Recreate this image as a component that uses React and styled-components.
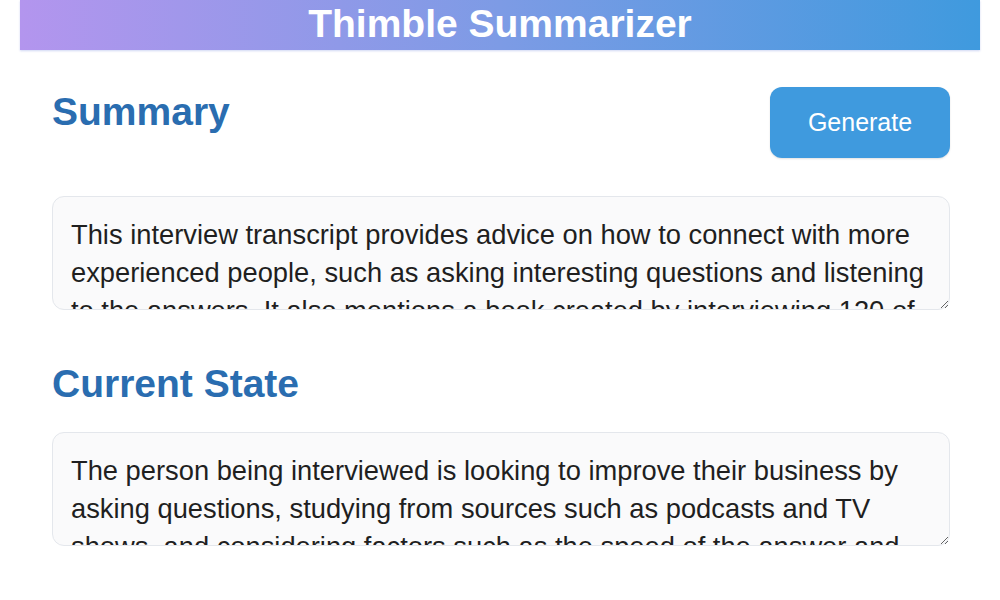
import React from "react";
import styled, { createGlobalStyle } from "styled-components";

const GlobalStyle = createGlobalStyle`
  body {
    margin: 0;
    background: #ffffff;
    font-family: "Liberation Sans", Arial, sans-serif;
  }
`;

const Header = styled.header`
  margin: 0 20px;
  height: 50px;
  display: flex;
  align-items: center;
  justify-content: center;
  padding-bottom: 4px;
  box-sizing: border-box;
  background: linear-gradient(90deg, #b395ee 0%, #7d9be5 50%, #3f9ade 100%);
  box-shadow: 0 1px 2px rgba(120, 140, 220, 0.35);
`;

const Title = styled.h1`
  margin: 0;
  color: #ffffff;
  font-size: 39px;
  font-weight: 700;
  line-height: 1;
`;

const Main = styled.main`
  padding: 37px 50px 0 52px;
`;

const Section = styled.section`
  margin-bottom: ${({ $gap }) => $gap || 0}px;
`;

const TopRow = styled.div`
  display: flex;
  justify-content: space-between;
  align-items: flex-start;
`;

const Heading = styled.h2`
  margin: ${({ $top }) => $top || 0}px 0 0;
  color: #2a6db0;
  font-size: 39px;
  font-weight: 700;
  line-height: 44px;
`;

const Button = styled.button`
  width: 180px;
  height: 71px;
  border: none;
  border-radius: 12px;
  background: #3f9ade;
  color: #ffffff;
  font-family: "Liberation Sans", Arial, sans-serif;
  font-size: 25px;
  cursor: pointer;
  box-shadow: 0 1px 2px rgba(0, 0, 0, 0.12);
`;

const Summary = styled.textarea`
  display: block;
  box-sizing: border-box;
  width: 100%;
  height: 114px;
  margin-top: ${({ $top }) => $top}px;
  padding: 19px 10px 0 18px;
  border: 1px solid #e4e7ec;
  border-radius: 12px;
  background: #fafafb;
  color: #1f1f1f;
  font-family: "Liberation Sans", Arial, sans-serif;
  font-size: 27.3px;
  line-height: 38px;
  overflow: hidden;
  outline: none;
`;

const summaryText =
  "This interview transcript provides advice on how to connect with more experienced people, such as asking interesting questions and listening to the answers. It also mentions a book created by interviewing 120 of the most successful people in the world.";

const stateText =
  "The person being interviewed is looking to improve their business by asking questions, studying from sources such as podcasts and TV shows, and considering factors such as the speed of the answer and the quality of the advice.";

export default function App() {
  return (
    <>
      <GlobalStyle />
      <Header>
        <Title>Thimble Summarizer</Title>
      </Header>
      <Main>
        <Section $gap={52}>
          <TopRow>
            <Heading $top={3}>Summary</Heading>
            <Button>Generate</Button>
          </TopRow>
          <Summary $top={38} readOnly value={summaryText} />
        </Section>
        <Section>
          <Heading>Current State</Heading>
          <Summary $top={26} readOnly value={stateText} />
        </Section>
      </Main>
    </>
  );
}
